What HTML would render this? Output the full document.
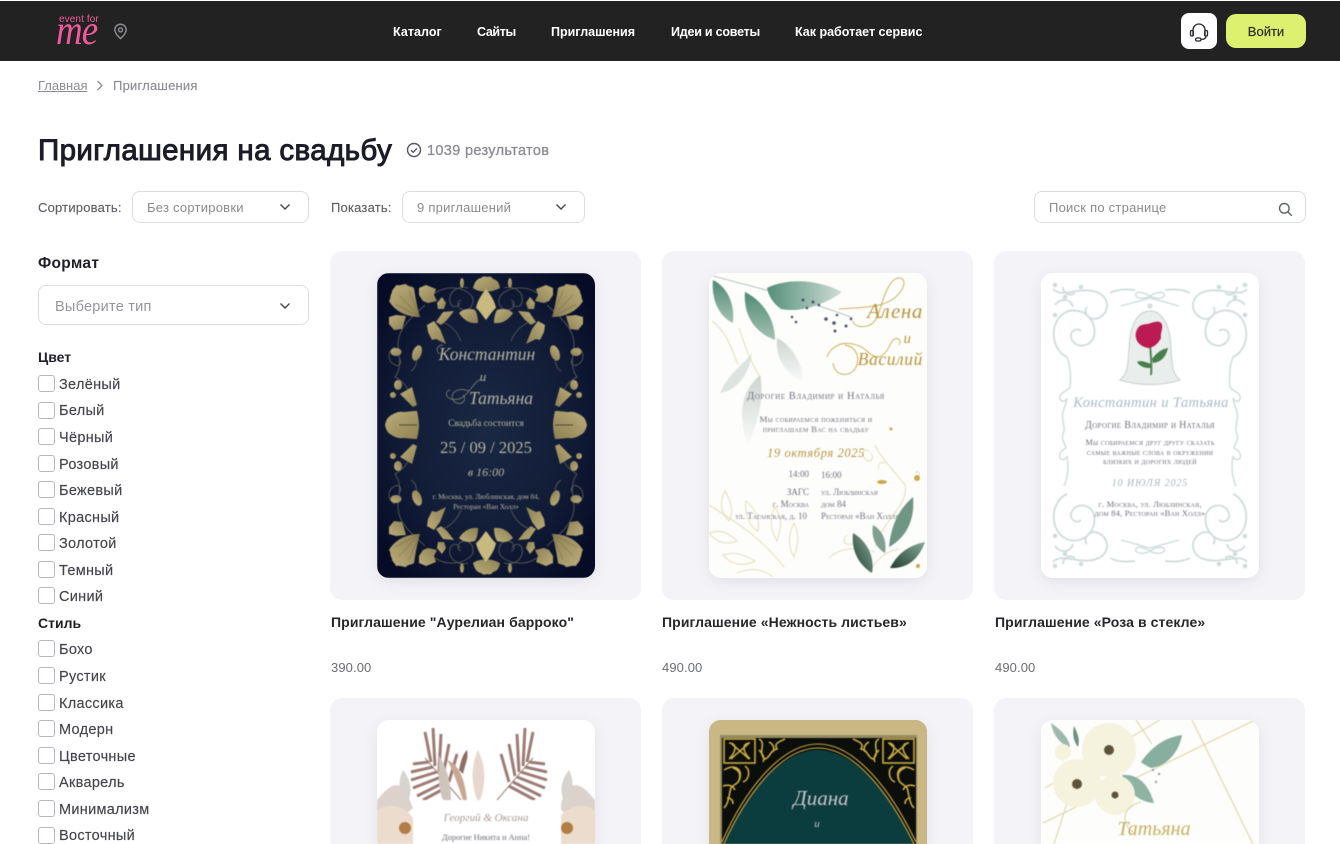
<!DOCTYPE html>
<html lang="ru"><head><meta charset="utf-8"><title>Приглашения на свадьбу</title>
<style>
*{box-sizing:border-box;margin:0;padding:0}
html,body{width:1340px;height:844px;overflow:hidden;background:#fff}
body{position:relative;font-family:"Liberation Sans",sans-serif;color:#20202a}
.t{position:absolute;white-space:nowrap;line-height:16px}
.hd{position:absolute;left:0;top:1px;width:1340px;height:60px;background:#222}
.nav{color:#fff;font-size:12.5px;font-weight:700;top:24px}
.box{position:absolute;background:#fff;border:1px solid #dcdce4;border-radius:8px}
.gr{color:#8b8b96}
.lab{font-size:13px;color:#5e5e6a;top:200px;letter-spacing:.2px;-webkit-text-stroke:.15px #5e5e6a}
.val{font-size:13px;color:#8a8a94;top:200px;letter-spacing:.24px}
.chev{position:absolute;width:12px;height:8px;fill:none;stroke:#44444e;stroke-width:1.4}
.cb{position:absolute;left:38px;width:17px;height:17px;border:1.5px solid #b6b6c4;border-radius:3px;background:#fff}
.cl{left:59px;font-size:14.5px;color:#44444f;letter-spacing:.3px;-webkit-text-stroke:.15px #44444f;margin-top:1px}
.sh{left:38px;font-size:14px;font-weight:700;color:#20202a}
.card{position:absolute;width:311px;height:349px;background:#f4f4f8;border-radius:12px}
.card.r2{height:146px;overflow:hidden;border-radius:12px 12px 0 0}
.art{position:absolute;left:47px;top:22px;width:218px;height:305px;border-radius:12px;overflow:hidden;box-shadow:0 4px 14px rgba(60,60,90,.10);background:#fff}
.r2 .art{height:124px;border-radius:12px 12px 0 0}
.art svg{display:block;filter:blur(.4px)}
.ct{font-size:14px;font-weight:700;color:#26262e;top:614px;letter-spacing:.1px}
.pr{font-size:13px;color:#6c6c76;top:660px;letter-spacing:.1px}
svg text{font-family:"Liberation Serif",serif}
.sc{font-variant:small-caps}
</style></head><body>

<div class="hd"></div>
<div class="t" style="left:59px;top:14px;font-size:10px;color:#ef5a9c;line-height:12px;letter-spacing:.1px">event for</div>
<div class="t" style="left:56px;top:16px;font:italic 42px/30px 'Liberation Serif',serif;color:#ef5a9c;letter-spacing:-1px;transform:scaleX(.88);transform-origin:left top">me</div>
<svg style="position:absolute;left:113px;top:23px" width="15" height="17" viewBox="0 0 15 17" fill="none" stroke="#8b8b8f" stroke-width="1.5"><path d="M7.5 15.6C4.5 12.6 1.800 10 1.800 6.900a5.700 5.700 0 0 1 11.400 0c0 3.100-2.700 5.700-5.700 8.700z"/><circle cx="7.500" cy="6.900" r="2"/></svg>

<div class="t nav" style="left:393px;letter-spacing:.05px">Каталог</div>
<div class="t nav" style="left:477px;letter-spacing:-.35px">Сайты</div>
<div class="t nav" style="left:551px">Приглашения</div>
<div class="t nav" style="left:671px;letter-spacing:-.22px">Идеи и советы</div>
<div class="t nav" style="left:795px">Как работает сервис</div>

<div style="position:absolute;left:1181px;top:13px;width:36px;height:36px;border-radius:8px;background:#fff"></div>
<svg style="position:absolute;left:1188px;top:21px" width="22" height="22" viewBox="0 0 22 22" fill="none" stroke="#26262c" stroke-width="1.300"><path d="M5 15V9a6 6 0 0 1 12 0v6"/><rect x="2.500" y="9.500" width="2.800" height="5.500" rx="1.300"/><rect x="16.700" y="9.500" width="2.800" height="5.500" rx="1.300"/><path d="M18 15c0 2.300-2 3.500-5 3.500"/><rect x="7.500" y="17" width="5.500" height="3" rx="1.500"/></svg>
<div style="position:absolute;left:1226px;top:14px;width:80px;height:34px;border-radius:10px;background:#def070"></div>
<div class="t" style="left:1226px;width:80px;text-align:center;top:24px;font-size:13px;color:#33332a;-webkit-text-stroke:.25px #33332a">Войти</div>

<div class="t gr" style="left:38px;top:78px;font-size:13px;text-decoration:underline">Главная</div>
<svg style="position:absolute;left:96px;top:80px" width="8" height="11" fill="none" stroke="#8b8b96" stroke-width="1.300"><path d="M1.500 1l4.500 4.500L1.500 10"/></svg>
<div class="t gr" style="left:113px;top:78px;font-size:13px;letter-spacing:.22px;-webkit-text-stroke:.15px #8b8b96">Приглашения</div>

<div class="t" style="left:38px;top:134px;font-size:29.500px;line-height:34px;color:#1c1c28;-webkit-text-stroke:.95px #1c1c28;letter-spacing:.38px">Приглашения на свадьбу</div>
<svg style="position:absolute;left:406px;top:142px" width="16" height="16" fill="none" stroke="#55555f" stroke-width="1.400"><circle cx="8" cy="8" r="6.500"/><path d="M5 8.200l2.200 2.100 3.800-4"/></svg>
<div class="t" style="left:427px;top:143px;font-size:14.500px;color:#8b8b96;-webkit-text-stroke:.3px #8b8b96;letter-spacing:.34px">1039 результатов</div>

<div class="t lab" style="left:38px">Сортировать:</div>
<div class="box" style="left:132px;top:191px;width:177px;height:32px"></div>
<div class="t val" style="left:147px">Без сортировки</div>
<svg class="chev" style="left:279px;top:203px" viewBox="0 0 12 8"><path d="M1.500 1.500L6 6l4.500-4.500"/></svg>
<div class="t lab" style="left:331px">Показать:</div>
<div class="box" style="left:402px;top:191px;width:183px;height:32px"></div>
<div class="t val" style="left:417px">9 приглашений</div>
<svg class="chev" style="left:555px;top:203px" viewBox="0 0 12 8"><path d="M1.500 1.500L6 6l4.500-4.500"/></svg>
<div class="box" style="left:1034px;top:191px;width:272px;height:32px"></div>
<div class="t val" style="left:1049px">Поиск по странице</div>
<svg style="position:absolute;left:1278px;top:202px" width="15" height="15" fill="none" stroke="#5f6472" stroke-width="1.400"><circle cx="6.300" cy="6.300" r="4.800"/><path d="M10 10l3.800 3.800"/></svg>

<div class="t" style="left:38px;top:256px;font-size:15.500px;font-weight:700;color:#1f1f28;letter-spacing:.3px">Формат</div>
<div class="box" style="left:38px;top:285px;width:271px;height:40px"></div>
<div class="t" style="left:55px;top:299px;font-size:14.500px;color:#94949e;letter-spacing:.25px">Выберите тип</div>
<svg class="chev" style="left:279px;top:302px" viewBox="0 0 12 8"><path d="M1.500 1.500L6 6l4.500-4.500"/></svg>

<div class="t sh" style="top:349px">Цвет</div>
<div class="cb" style="top:375px"></div><div class="t cl" style="top:376px">Зелёный</div>
<div class="cb" style="top:402px"></div><div class="t cl" style="top:402px">Белый</div>
<div class="cb" style="top:428px"></div><div class="t cl" style="top:429px">Чёрный</div>
<div class="cb" style="top:455px"></div><div class="t cl" style="top:456px">Розовый</div>
<div class="cb" style="top:481px"></div><div class="t cl" style="top:482px">Бежевый</div>
<div class="cb" style="top:508px"></div><div class="t cl" style="top:509px">Красный</div>
<div class="cb" style="top:534px"></div><div class="t cl" style="top:535px">Золотой</div>
<div class="cb" style="top:561px"></div><div class="t cl" style="top:562px">Темный</div>
<div class="cb" style="top:587px"></div><div class="t cl" style="top:588px">Синий</div>
<div class="t sh" style="top:615px">Стиль</div>
<div class="cb" style="top:640px"></div><div class="t cl" style="top:641px">Бохо</div>
<div class="cb" style="top:667px"></div><div class="t cl" style="top:668px">Рустик</div>
<div class="cb" style="top:694px"></div><div class="t cl" style="top:695px">Классика</div>
<div class="cb" style="top:720px"></div><div class="t cl" style="top:721px">Модерн</div>
<div class="cb" style="top:747px"></div><div class="t cl" style="top:748px">Цветочные</div>
<div class="cb" style="top:773px"></div><div class="t cl" style="top:774px">Акварель</div>
<div class="cb" style="top:800px"></div><div class="t cl" style="top:801px">Минимализм</div>
<div class="cb" style="top:827px"></div><div class="t cl" style="top:827px">Восточный</div>

<!-- Card 1 -->
<div class="card" style="left:330px;top:251px"><div class="art">
<svg width="219" height="305" viewBox="0 0 219 305">
<defs>
<radialGradient id="n1" cx="50%" cy="50%" r="62%"><stop offset="0" stop-color="#1b2944"/><stop offset=".65" stop-color="#111b36"/><stop offset="1" stop-color="#060c26"/></radialGradient>
<linearGradient id="au" x1="0" y1="0" x2="1" y2="1"><stop offset="0" stop-color="#bcae7a"/><stop offset="1" stop-color="#8d8053"/></linearGradient>
<g id="corner">
<g fill="none" stroke="#5f6158" stroke-width=".8"><path d="M48 32c-10 10-22 18-26 32-4 14 6 26-4 40 8 4 12 10 16 18"/><path d="M58 20c12-8 28-6 36 2 6 8-2 18-10 14-4-2-4-8 0-9"/><path d="M18 74c-8 4-8 14 0 18 4 2 7-2 5-6"/><path d="M36 78c6 8 4 16-2 20"/><path d="M62 48c10 2 18 10 22 20"/></g>
<g fill="url(#au)">
<path d="M43 44C32 44 19 40 12 28c2-2 1-7 3-8-1-3 3-5 4-8 4 1 7-1 10-1 2 3 6 2 8 4 1 7 3 19 6 29z"/>
<path d="M42 15l7-3 10 4-2 6 3 6-9 2-5-2-4-6z"/>
<path d="M12 44l7-2 10 1-2 7-2 6-8 1-5-6z"/>
<path d="M50 52l7-4 6 8 6 15-10-5-4 1-4-8z"/>
<path d="M60 30l5-6 4 6-2 6-6 0z"/>
<path d="M59 49l7-10 11-1-7 9-6 5z"/>
<ellipse cx="19" cy="79" rx="5.500" ry="4"/><ellipse cx="40" cy="80" rx="4.500" ry="8" transform="rotate(20 40 80)"/>
<ellipse cx="21" cy="112" rx="4" ry="5"/><ellipse cx="16" cy="122" rx="3" ry="3"/>
</g>
<g stroke="#6e6443" stroke-width=".5" fill="none"><path d="M43 44L22 22M43 44L32 18M43 44L18 31"/></g>
</g>
<g id="topm">
<g fill="none" stroke="#5f6058" stroke-width=".8"><path d="M-18 15c-10-3-20 4-18 14 1 6 8 6 10 1"/><path d="M18 15c10-3 20 4 18 14-1 6-8 6-10 1"/></g>
<g fill="url(#au)"><path d="M-13 15c2-7 4-9 8-10 2-2 4-2 6-1 3-1 5 0 6 2 4 1 6 3 7 9-6 3-10 4-14 3-4 1-9 0-13-3z"/><path d="M-10 35c1-6 5-13 10-19 5 6 9 13 10 19-3 2-6 7-10 12-4-5-7-10-10-12z" fill="#c8b97f"/><path d="M-27 40c4-4 10-5 16-3 2 3 3 8 3 13-7 1-14-2-19-10z"/><path d="M27 40c-4-4-10-5-16-3-2 3-3 8-3 13 7 1 14-2 19-10z"/><ellipse cx="-24" cy="10" rx="2" ry="5"/><ellipse cx="24" cy="10" rx="2" ry="5"/></g>
</g>
<g id="side"><g fill="url(#au)"><path d="M8 152c1-4 2-7 5-9 3-2 8-5 13-4 4 0 8-1 14-1 1 4 2 10 2 14s-1 10-2 14c-6 0-10-1-14-1-5 1-10-2-13-4-3-2-4-5-5-9z"/><path d="M35 114l5 18-4 2-13-13z"/><path d="M35 191l5-18-4-2-13 13z"/></g><path d="M22 152h18" stroke="#4e4a36" stroke-width="1"/></g>
</defs>
<rect width="219" height="305" fill="url(#n1)"/>
<use href="#corner"/><use href="#corner" transform="translate(218 0) scale(-1 1)"/><use href="#corner" transform="translate(0 305) scale(1 -1)"/><use href="#corner" transform="translate(218 305) scale(-1 -1)"/>
<use href="#topm" transform="translate(109 0)"/><use href="#topm" transform="translate(109 305) scale(1 -1)"/>
<use href="#side"/><use href="#side" transform="translate(218 0) scale(-1 1)"/>
<g fill="#b4b3a0" text-anchor="middle" font-style="italic">
<text x="110" y="87" font-size="17.500">Константин</text>
<text x="106" y="108" font-size="13">и</text>
<text x="124" y="131" font-size="17.500">Татьяна</text>
<text x="109" y="153" font-size="9.500" font-style="normal">Свадьба состоится</text>
<text x="109" y="180" font-size="16.500" font-style="normal">25 / 09 / 2025</text>
<text x="109" y="203" font-size="12">в 16:00</text>
<text x="109" y="226" font-size="7.200" font-style="normal">г. Москва, ул. Люблинская, дом 84,</text>
<text x="109" y="236" font-size="7.200" font-style="normal">Ресторан «Ван Холл»</text></g>
<g fill="none" stroke="#8f8d78" stroke-width=".7"><path d="M92 118c-16-6-22 8-12 12 6 2 10-4 6-8"/><path d="M104 106c-10 4-14 24-30 20-6-2-6-8-1-9"/><path d="M66 72c-6 0-8 6-3 9"/></g>
</svg></div></div>
<div class="t ct" style="left:331px">Приглашение "Аурелиан барроко"</div>
<div class="t pr" style="left:331px">390.00</div>

<!-- Card 2 -->
<div class="card" style="left:662px;top:251px"><div class="art">
<svg width="219" height="305" viewBox="0 0 219 305">
<defs><linearGradient id="gl" x1="0" y1="0" x2="1" y2="0"><stop offset="0" stop-color="#54907a"/><stop offset="1" stop-color="#cfddd6"/></linearGradient>
<linearGradient id="gv" x1="0" y1="0" x2="0" y2="1"><stop offset="0" stop-color="#4f8a73"/><stop offset="1" stop-color="#a6c2b5"/></linearGradient>
<linearGradient id="gf" x1="0" y1="0" x2="0" y2="1"><stop offset="0" stop-color="#cdd4d0"/><stop offset="1" stop-color="#fafbfa"/></linearGradient>
<linearGradient id="gd" x1="0" y1="1" x2="1" y2="0"><stop offset="0" stop-color="#233f32"/><stop offset="1" stop-color="#86a998"/></linearGradient></defs>
<rect width="219" height="305" fill="#fdfdfc"/>
<path d="M4 3c30 8 55 14 80 22 20 6 40 12 60 20" fill="none" stroke="#a5b5ad" stroke-width=".8"/>
<path d="M58 15C78 5 108 6 133 19 116 32 90 40 72 36 64 30 60 24 58 15z" fill="url(#gl)"/>
<path d="M4 7C18 14 26 30 24 50 10 44 2 26 4 7z" fill="url(#gv)"/>
<path d="M36 19C54 28 66 46 66 67 46 60 34 42 36 19z" fill="url(#gv)"/>
<path d="M68 65C82 72 94 90 94 109 78 102 66 86 68 65z" fill="url(#gf)"/>
<path d="M43 80C34 92 20 100 11 120 26 118 40 104 43 80z" fill="#dde3e0"/>
<path d="M51 102C36 116 26 134 39 172 48 150 56 128 51 102z" fill="url(#gf)"/>
<g fill="#50536a"><circle cx="94" cy="27" r="1.500"/><circle cx="104" cy="29" r="1.500"/><circle cx="98" cy="35" r="1.300"/><circle cx="110" cy="32" r="1.300"/><circle cx="83" cy="44" r="1.300"/><circle cx="87" cy="49" r="1.300"/><circle cx="117" cy="46" r="1.800"/><circle cx="125" cy="50" r="1.800"/><circle cx="137" cy="53" r="1.500"/><circle cx="126" cy="58" r="1.500"/><circle cx="142" cy="46" r="1.300"/><circle cx="128" cy="42" r="1.300"/></g>
<g fill="none" stroke="#dfd5a4" stroke-width=".8"><path d="M3 48c14 10 20 28 26 44"/><path d="M30 55c6 18 12 36 22 50"/>
<path d="M0 232c22 14 50 30 75 62"/><path d="M16 218c8 14 8 22 4 30-8-8-10-18-4-30zM37 228c10 8 14 18 12 30-8-4-14-16-12-30zM66 234c8 12 6 22 2 34-6-10-8-22-2-34zM85 250c6 12 4 22 0 34-6-10-6-22 0-34zM0 260c12-4 20 0 28 8-12 4-20 2-28-8zM14 282c12-4 22 0 32 6-12 6-24 4-32-6zM28 300c14-6 26-4 36 4"/>
<path d="M166 172c6 14 18 24 30 40 4 20-20 32-30 62"/><path d="M160 178c-6-4-8 4-4 8 4 4 10 2 6-6M176 190c-4-2-8 2-6 6M206 200c4-4 6 2 2 6"/><path d="M138 262c-6 6-2 12 8 8M120 285c10-10 30-12 46-6M160 300c6-12 16-22 30-24"/></g>
<g fill="#c9a94b"><ellipse cx="173" cy="209" rx="5" ry="2"/><ellipse cx="208" cy="205" rx="3" ry="3"/><circle cx="182" cy="156" r="1.500"/><circle cx="209" cy="293" r="2"/></g>
<g fill="none" stroke="#c9a94b" stroke-width=".9"><path d="M130 36c24-2 50 0 62-18 8-12-2-18-10-8-10 14-10 32-18 40-8 6-20 4-20-2"/><path d="M118 84c6-16 26-18 40-6 8 8 16 10 24-8 4-8 12-4 8 2"/><path d="M124 90c2 14 16 14 22 6 6-10 2-22-10-24"/></g>
<g fill="#b8953c" font-style="italic" text-anchor="end"><text x="214" y="45" font-size="21" letter-spacing=".6">Алена</text><text x="202" y="70" font-size="15">и</text><text x="214" y="92" font-size="17.500" letter-spacing=".6">Василий</text></g>
<g fill="#70707e" text-anchor="middle" class="sc">
<text x="107" y="126" font-size="10.500" letter-spacing=".55">Дорогие Владимир и Наталья</text>
<text x="107" y="149" font-size="8.800" letter-spacing=".3">Мы собираемся пожениться и</text>
<text x="107" y="159" font-size="8.800" letter-spacing=".3">приглашаем Вас на свадьбу</text>
</g>
<text x="107" y="184" font-size="12.500" fill="#b8953c" font-style="italic" text-anchor="middle" letter-spacing=".6">19 октября 2025</text>
<g fill="#70707e" font-size="9" class="sc">
<text x="100" y="204" text-anchor="end">14:00</text><text x="112" y="205">16:00</text>
<text x="100" y="222" text-anchor="end">ЗАГС</text><text x="112" y="222">ул. Люблинская</text>
<text x="100" y="234" text-anchor="end">г. Москва</text><text x="112" y="234">дом 84</text>
<text x="98" y="246" text-anchor="end">ул. Таганская, д. 10</text><text x="112" y="246">Ресторан «Ван Холл»</text></g>
<path d="M180 274C182 252 190 236 204 224 206 246 198 264 180 274z" fill="#6f9583"/>
<path d="M181 295C190 278 202 272 216 269 210 286 198 296 181 295z" fill="url(#gd)"/>
<path d="M164 252C174 258 178 268 176 280 166 274 162 264 164 252z" fill="#7fa08f"/>
<path d="M144 260C158 268 166 284 163 300 150 292 142 278 144 260z" fill="url(#gd)"/>
</svg></div></div>
<div class="t ct" style="left:662px">Приглашение «Нежность листьев»</div>
<div class="t pr" style="left:662px">490.00</div>

<!-- Card 3 -->
<div class="card" style="left:994px;top:251px"><div class="art">
<svg width="219" height="305" viewBox="0 0 219 305">
<defs><g id="sw" fill="none" stroke="#cfdcdb" stroke-width="1.800"><path d="M26 84C8 76 8 44 28 38 46 34 58 52 52 66 46 76 32 74 30 64 29 58 36 54 40 58"/><path d="M12 16c8 10 28-4 46 4 14 8 8 24-4 26-8 0-12-8-8-12"/><path d="M14 32c6-8 16-6 18 2M22 14c0 6 6 10 12 6"/><path d="M69 20c8-4 16-4 25-3"/><circle cx="14" cy="12" r="1.400" fill="#cfdcdb"/><circle cx="24" cy="24" r="1.400" fill="#cfdcdb"/><circle cx="40" cy="14" r="1.400" fill="#cfdcdb"/><circle cx="14" cy="42" r="1.400" fill="#cfdcdb"/></g></defs>
<rect width="219" height="305" fill="#fff"/>
<use href="#sw"/><use href="#sw" transform="translate(218 0) scale(-1 1)"/><use href="#sw" transform="translate(0 305) scale(1 -1)"/><use href="#sw" transform="translate(218 305) scale(-1 -1)"/>
<g fill="none" stroke="#cfdcdb" stroke-width="1.400"><path d="M26 84c4 10 4 20 3 30-2 4-12 6-10 12 2 4 6 2 7-1-1 8-6 14-4 22 1 8 2 10 0 14-2 8 2 8 3 14-4 2-8 6-6 10 3 4 7 0 7-2 2 10 1 22-3 30"/><path d="M192 84c-4 10-4 20-3 30 2 4 12 6 10 12-2 4-6 2-7-1 1 8 6 14 4 22-1 8-2 10 0 14 2 8-2 8-3 14 4 2 8 6 6 10-3 4-7 0-7-2-2 10-1 22 3 30"/><path d="M80 33l29-8 29 8"/><path d="M109 23c-8-5-16-5-14 0 2 3 9 3 14 0 8-5 16-5 14 0-2 3-9 3-14 0z"/><path d="M80 267l29 8 29-8"/><path d="M109 278c-8-5-16-5-14 0 2 3 9 3 14 0 8-5 16-5 14 0-2 3-9 3-14 0z"/></g>
<path d="M79 107c7-6 8-12 9-32 1-24 9-37 21-37s20 13 21 37c1 20 2 26 9 32-18 6-42 6-60 0z" fill="#e9edec" stroke="#c7cfce"/>
<circle cx="109" cy="33" r="2.200" fill="#dfe4e3" stroke="#c0c8c7" stroke-width=".6"/>
<path d="M109 72c1 12 2 20 1 30" stroke="#4f8651" stroke-width="2" fill="none"/>
<path d="M111 86c6-8 11-10 16-11-2 8-6 14-15 15zM110 91c-5-2-10-4-14-2 4 6 10 6 14 6z" fill="#487e4a"/>
<path d="M97 55c3-5 9-3 13-5 6-2 10-2 11 2 1 5-2 8-1 13-3 6-8 10-13 10-6-1-11-5-12-10-1-4 0-7 2-10z" fill="#b91b52"/>
<g text-anchor="middle"><text x="110" y="134" font-size="14.500" fill="#a6bacb" font-style="italic" letter-spacing=".4">Константин и Татьяна</text>
<g fill="#70707c" class="sc"><text x="109" y="155" font-size="10" letter-spacing=".3">Дорогие Владимир и Наталья</text>
<text x="109" y="172" font-size="8.200" letter-spacing=".25">Мы собираемся друг другу сказать</text>
<text x="109" y="182" font-size="8.200" letter-spacing=".25">самые важные слова в окружении</text>
<text x="109" y="191" font-size="8.200" letter-spacing=".25">близких и дорогих людей</text></g>
<text x="109" y="213" font-size="10" fill="#a8b4bf" font-style="italic" letter-spacing=".9">10 ИЮЛЯ 2025</text>
<g fill="#70707c" class="sc"><text x="109" y="234" font-size="8.500" letter-spacing=".2">г. Москва, ул. Люблинская,</text>
<text x="109" y="243" font-size="8.500" letter-spacing=".2">дом 84, Ресторан «Ван Холл»</text></g></g>
</svg></div></div>
<div class="t ct" style="left:995px">Приглашение «Роза в стекле»</div>
<div class="t pr" style="left:995px">490.00</div>

<!-- Card 4 -->
<div class="card r2" style="left:330px;top:698px"><div class="art">
<svg width="219" height="124" viewBox="0 0 219 124">
<defs><g id="fern" stroke="#9c7c74" stroke-width="3" fill="none"><path d="M20 38L56 80" stroke-width="1"/><path d="M8 44L24 42M6 52l22-5M6 60l26-8M8 68l28-11M12 76l28-14M18 80l26-14M20 12l6 30M28 8l2 38M36 14l-2 38M44 24l-6 32M52 34l-8 28"/></g></defs>
<rect width="219" height="124" fill="#fff"/>
<use href="#fern" transform="translate(28 0)"/>
<use href="#fern" transform="translate(176 0) scale(-1 1)"/>
<path d="M66 80C60 66 62 50 62 36c6 8 12 24 12 44z" fill="#cfc4bc"/>
<path d="M86 80C80 62 74 46 70 40c12 4 18 20 20 40z" fill="#c9a893"/>
<path d="M82 50c2-10 4-16 8-20 2 8-2 14-4 24z" fill="#8e6d64"/>
<path d="M100 80C94 62 94 46 101 30c8 16 8 34 2 50z" fill="#e6d8cc"/>
<path d="M0 80C10 68 20 58 30 72 32 78 34 84 36 88L0 118z" fill="#dcd2cb"/>
<path d="M218 80C208 68 198 58 188 72 186 78 184 84 182 88L218 118z" fill="#dcd2cb"/>
<path d="M26 50c8 10 10 22 4 34-8-10-10-22-4-34zM192 50c-8 10-10 22-4 34 8-10 10-22 4-34z" fill="#d8d3cf"/>
<circle cx="14" cy="112" r="26" fill="#ecdccd"/><circle cx="204" cy="112" r="26" fill="#ecdccd"/>
<circle cx="28" cy="108" r="6" fill="#b07d45"/><circle cx="190" cy="108" r="6" fill="#b07d45"/>
<rect x="36" y="80" width="148" height="44" fill="#fff"/>
<text x="109" y="101" font-size="11" text-anchor="middle" font-style="italic" fill="#a89a95">Георгий &amp; Оксана</text>
<text x="109" y="120" font-size="8.300" text-anchor="middle" fill="#6f6f78">Дорогие Никита и Анна!</text>
</svg></div></div>

<!-- Card 5 -->
<div class="card r2" style="left:662px;top:698px"><div class="art" style="background:#c9b784">
<svg width="219" height="124" viewBox="0 0 219 124">
<defs><g id="orn" fill="none" stroke="#c9a945" stroke-width="1.600">
<rect x="15" y="19" width="31" height="24"/><path d="M20 23c8 0 8 8 0 16M41 23c-8 0-8 8 0 16M22 23c8 8 10 8 18 16M40 23c-8 8-10 8-18 16"/>
<path d="M50 19c8 4-2 14 6 20 6-2 4-8 12-10-4-6 4-8 8-10M50 30c4 4 6 8 4 12M60 22c4 2 6 6 4 10"/>
<path d="M15 50c10-6 18-2 16 8-2 8-10 6-10 14-2 8-2 12-6 16M24 48c6 2 8 6 6 12M14 66c6-2 10 0 12 4"/>
<path d="M36 46c6 4 4 14-2 16M18 78c4 0 6 2 6 6"/>
</g></defs>
<rect width="219" height="124" fill="#c9b784"/>
<rect x="11" y="15" width="197" height="109" fill="#6b6a49" opacity=".55"/>
<rect x="13" y="18" width="194" height="106" fill="#0b0e0a"/>
<path d="M13 128C34 80 70 30 109 30s75 50 98 98z" fill="#0b3d3e"/>
<g fill="none" stroke="#c9a945" stroke-width="1.100"><path d="M13 128C34 80 70 28 109 28s75 52 98 100"/><path d="M13 122C34 74 70 24 109 24s75 50 98 98"/></g>
<use href="#orn"/><use href="#orn" transform="translate(220 0) scale(-1 1)"/>
<g fill="#c9c3cd" text-anchor="middle" font-style="italic"><text x="112" y="85" font-size="21">Диана</text><text x="108" y="107" font-size="11">и</text></g>
</svg></div></div>

<!-- Card 6 -->
<div class="card r2" style="left:994px;top:698px"><div class="art">
<svg width="219" height="124" viewBox="0 0 219 124">
<rect width="219" height="124" fill="#fdfdfc"/>
<g fill="none" stroke="#dfd29a" stroke-width="1"><path d="M151 0l61 124"/><path d="M214 0L2 103"/><path d="M4 68L119 0"/><path d="M13 124l13-41"/><path d="M95 0l16 24"/></g>
<path d="M100 42C110 28 122 18 141 15 138 32 126 46 110 48 106 46 102 44 100 42z" fill="#87ae9e"/>
<path d="M81 55C94 54 106 60 113 83 98 82 86 72 81 55z" fill="#8db3a2"/>
<path d="M10 3C20 10 28 18 29 27 18 24 12 14 10 3z" fill="#9eb8aa"/><path d="M33 6c4 8 6 14 4 21-4-5-6-12-4-21z" fill="#6c937f"/>
<g fill="#f5f2de"><circle cx="36" cy="63" r="24"/><circle cx="68" cy="30" r="27"/><circle cx="74" cy="75" r="20"/><circle cx="22" cy="32" r="8"/></g>
<g fill="#5e523a"><circle cx="68" cy="30" r="5"/><circle cx="36" cy="64" r="5"/><circle cx="74" cy="75" r="3.500"/></g>
<g fill="#9aa3ab"><circle cx="112" cy="50" r="1.200"/><circle cx="118" cy="54" r="1.200"/><circle cx="115" cy="62" r="1.200"/><circle cx="106" cy="72" r="1.200"/></g>
<text x="113" y="115" font-size="20" fill="#c7b160" font-style="italic" text-anchor="middle">Татьяна</text>
<path d="M92 112c-10-6-14-24 8-30" fill="none" stroke="#d6c487" stroke-width=".8"/>
</svg></div></div>

</body></html>
